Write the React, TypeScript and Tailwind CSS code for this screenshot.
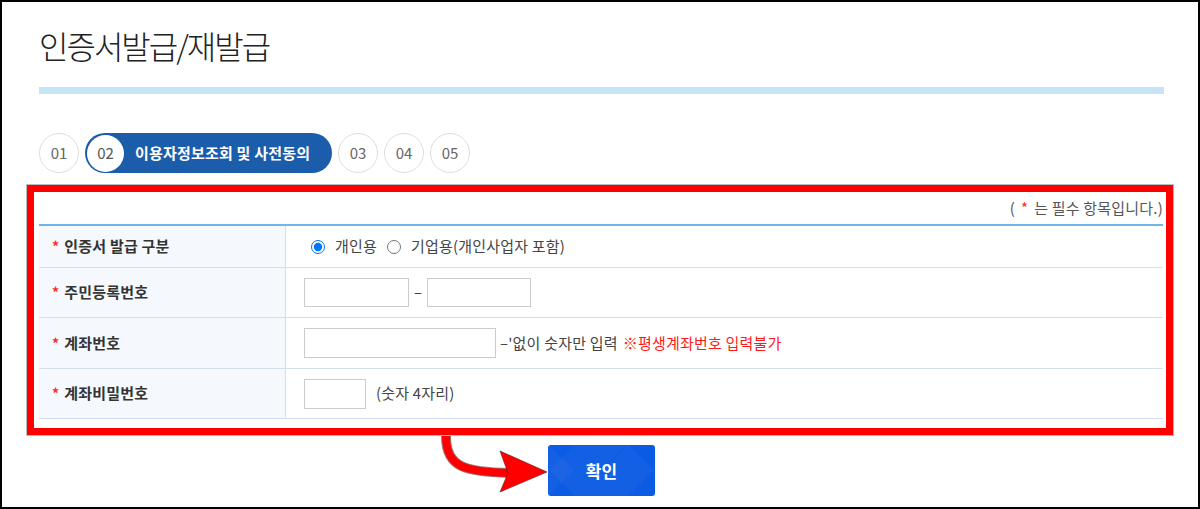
import React from 'react';

const steps = ['01', '02', '03', '04', '05'];

const Star = () => <span className="text-[#ff2a2a] mr-[5px] text-[14px]">*</span>;

const App: React.FC = () => {
  return (
    <div className="relative w-[1200px] h-[509px] box-border border-2 border-black bg-white overflow-hidden font-['Noto_Sans_CJK_KR','Noto_Sans',sans-serif] text-[#333]">
      {/* Title */}
      <h1 className="ml-[37px] pt-[22px] text-[32px] leading-[42px] font-light tracking-[-2px] text-[#222]">
        인증서발급/재발급
      </h1>
      <div className="ml-[37px] mt-[21px] w-[1125px] h-[7px] bg-[#c5e4f6]"></div>

      {/* Steps */}
      <div className="ml-[37px] mt-[39px] flex items-center gap-[6px]">
        {steps.map((step) =>
          step === '02' ? (
            <div
              key={step}
              className="h-[40px] w-[247px] rounded-full bg-[#1b5dab] flex items-center pl-[2px]"
            >
              <div className="w-[37px] h-[37px] rounded-full bg-white flex items-center justify-center text-[15px] text-[#555]">
                {step}
              </div>
              <span className="ml-[11px] text-[15px] font-bold text-white tracking-[0.2px]">
                이용자정보조회 및 사전동의
              </span>
            </div>
          ) : (
            <div
              key={step}
              className="w-[40px] h-[40px] rounded-full border border-[#dedede] flex items-center justify-center text-[15px] text-[#666]"
            >
              {step}
            </div>
          )
        )}
      </div>

      {/* Form box */}
      <div className="ml-[25px] mt-[12px] w-[1146px] box-border border-[7px] border-[#ff0000] outline outline-1 outline-[#bdbdbd] shadow-[1px_1px_0_#555] pl-[5px] pr-[3px] pb-[9px]">
        <div className="h-[32px] flex items-center justify-end text-[15px] text-[#555] tracking-[0.2px]">
          ( <span className="text-[#ff2a2a] mx-[6px]">*</span> 는 필수 항목입니다.)
        </div>
        <div className="border-t-2 border-[#6cb6e8] text-[15px] tracking-[0.2px]">
          <div className="grid grid-cols-[247px_1fr] h-[42px] border-b border-[#d3dfea]">
            <div className="bg-[#f5f8fc] border-r border-[#d3dfea] flex items-center pl-[13px] font-semibold">
              <Star />인증서 발급 구분
            </div>
            <div className="flex items-center pl-[25px] text-[#444]">
              <label className="flex items-center">
                <input type="radio" name="kind" defaultChecked className="w-[14px] h-[14px] m-0" />
                <span className="ml-[10px]">개인용</span>
              </label>
              <label className="flex items-center ml-[10px]">
                <input type="radio" name="kind" className="w-[14px] h-[14px] m-0" />
                <span className="ml-[10px]">기업용(개인사업자 포함)</span>
              </label>
            </div>
          </div>

          <div className="grid grid-cols-[247px_1fr] h-[50px] border-b border-[#d3dfea]">
            <div className="bg-[#f5f8fc] border-r border-[#d3dfea] flex items-center pl-[13px] font-semibold">
              <Star />주민등록번호
            </div>
            <div className="flex items-center pl-[18px] text-[#444]">
              <input type="text" className="w-[105px] h-[29px] border border-[#cccccc] outline-none" />
              <span className="mx-[5px]">–</span>
              <input type="text" className="w-[104px] h-[29px] border border-[#cccccc] outline-none" />
            </div>
          </div>

          <div className="grid grid-cols-[247px_1fr] h-[51px] border-b border-[#d3dfea]">
            <div className="bg-[#f5f8fc] border-r border-[#d3dfea] flex items-center pl-[13px] font-semibold">
              <Star />계좌번호
            </div>
            <div className="flex items-center pl-[18px] text-[#444]">
              <input type="text" className="w-[192px] h-[30px] border border-[#cccccc] outline-none" />
              <span className="ml-[4px]">–'없이 숫자만 입력</span>
              <span className="ml-[5px] text-[#ff1a1a]">※평생계좌번호 입력불가</span>
            </div>
          </div>

          <div className="grid grid-cols-[247px_1fr] h-[50px] border-b border-[#d3dfea]">
            <div className="bg-[#f5f8fc] border-r border-[#d3dfea] flex items-center pl-[13px] font-semibold">
              <Star />계좌비밀번호
            </div>
            <div className="flex items-center pl-[18px] text-[#444]">
              <input type="password" className="w-[62px] h-[30px] border border-[#cccccc] outline-none" />
              <span className="ml-[10px]">(숫자 4자리)</span>
            </div>
          </div>
        </div>
      </div>

      {/* Confirm button */}
      <div className="ml-[546px] mt-[10px]">
        <button className="relative w-[107px] h-[51px] rounded-[3px] bg-[#0b5be4] overflow-hidden text-white text-[17px] font-bold">
          <svg className="absolute inset-0" width="107" height="51" viewBox="0 0 107 51">
            <g fill="#ffffff" fillOpacity="0.035">
              <polygon points="0,0 26,25 0,51" />
              <polygon points="27,0 53,25 27,51 1,25" />
              <polygon points="80,0 106,25 80,51 54,25" />
              <polygon points="53,-25 79,0 53,25 27,0" />
              <polygon points="53,25 79,51 53,76 27,51" />
            </g>
          </svg>
          <span className="relative">확인</span>
        </button>
      </div>

      {/* Red arrow */}
      <svg className="absolute inset-0 pointer-events-none" width="1196" height="505" viewBox="2 2 1196 505">
        <path d="M446,436 C446,468 466,472 510,473" fill="none" stroke="#5a2020" strokeOpacity="0.6" strokeWidth="10" />
        <path d="M446,436 C446,468 466,472 510,473" fill="none" stroke="#ff0000" strokeWidth="8" />
        <polygon points="500,451 547,472 500,492 508,473" fill="#ff0000" stroke="#5a2020" strokeOpacity="0.6" strokeWidth="1" />
      </svg>
    </div>
  );
};

export default App;
